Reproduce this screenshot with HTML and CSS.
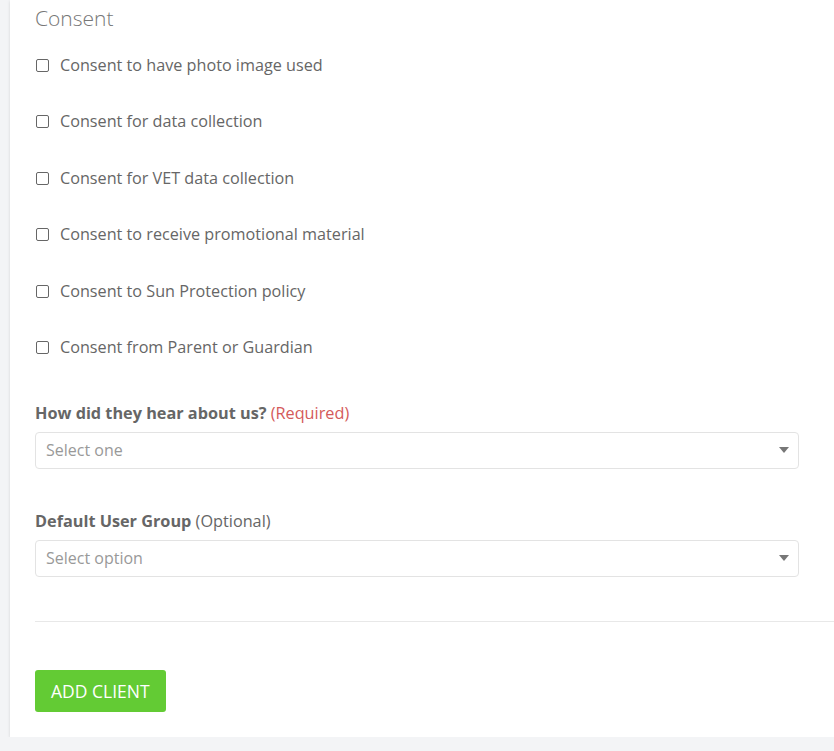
FILE: index.html
```html
<!DOCTYPE html>
<html>
<head>
    <meta charset="utf-8">
    <title>Add client</title>
    <link rel="stylesheet" href="styles.css">
</head>
<body>
    <div class="card">
        <h3 class="section-title">Consent</h3>

        <div class="consent-list">
            <label class="check-row"><input type="checkbox"> Consent to have photo image used</label>
            <label class="check-row"><input type="checkbox"> Consent for data collection</label>
            <label class="check-row"><input type="checkbox"> Consent for VET data collection</label>
            <label class="check-row"><input type="checkbox"> Consent to receive promotional material</label>
            <label class="check-row"><input type="checkbox"> Consent to Sun Protection policy</label>
            <label class="check-row"><input type="checkbox"> Consent from Parent or Guardian</label>
        </div>

        <div class="field field-first">
            <div class="field-label">How did they hear about us? <span class="req">(Required)</span></div>
            <div class="select-box">
                <span class="placeholder">Select one</span>
                <span class="caret"></span>
            </div>
        </div>

        <div class="field">
            <div class="field-label">Default User Group <span class="opt">(Optional)</span></div>
            <div class="select-box">
                <span class="placeholder">Select option</span>
                <span class="caret"></span>
            </div>
        </div>

        <hr class="divider">

        <button class="btn-add">ADD CLIENT</button>
    </div>
</body>
</html>
```

FILE: styles.css
```css
html, body {
    margin: 0;
    padding: 0;
}

body {
    background-color: #f3f4f6;
    font-family: "Open Sans", "Liberation Sans", sans-serif;
    color: #666;
    overflow: hidden;
}

.card {
    background: #fff;
    margin-left: 10px;
    width: 860px;
    padding: 4px 25px 25px 25px;
    box-shadow: 0 1px 3px rgba(0, 0, 0, 0.13);
}

.section-title {
    margin: 0;
    font-size: 21px;
    font-weight: 300;
    line-height: 28px;
    color: #777;
}

.consent-list {
    display: flex;
    flex-direction: column;
    gap: 34.4px;
    margin-top: 22px;
}

    .check-row {
        display: flex;
        align-items: center;
        gap: 11px;
        font-size: 16.2px;
        line-height: 22px;
        color: #666;
    }

    .check-row input {
        appearance: none;
        -webkit-appearance: none;
        box-sizing: border-box;
        width: 13px;
        height: 13px;
        margin: 1px 0 0 1px;
        border: 1px solid #666;
        border-radius: 2px;
        background: #fff;
    }

.field {
    margin-top: 41px;
    width: 764px;
}

.field-first {
    margin-top: 44px;
}

    .field-label {
        font-size: 16.25px;
        line-height: 22px;
        font-weight: 700;
        color: #666;
        margin-bottom: 8px;
    }

    .field-label .req {
        font-weight: 400;
        color: #d45a5a;
    }

    .field-label .opt {
        font-weight: 400;
        color: #666;
    }

.select-box {
    display: flex;
    align-items: center;
    justify-content: space-between;
    height: 35px;
    border: 1px solid #e3e3e3;
    border-radius: 4px;
    padding: 0 9px 0 10px;
}

    .placeholder {
        font-size: 16px;
        color: #999;
    }

    .caret {
        width: 0;
        height: 0;
        border-left: 5px solid transparent;
        border-right: 5px solid transparent;
        border-top: 6px solid #777;
    }

.divider {
    margin: 44px 0 48px 0;
    border: 0;
    border-top: 1px solid #e8e8e8;
}

.btn-add {
    display: block;
    height: 42px;
    padding: 0 16px;
    border: 0;
    border-radius: 3px;
    background-color: #63cb34;
    color: #fff;
    font-family: "Open Sans", "Liberation Sans", sans-serif;
    font-size: 17.5px;
}
```
